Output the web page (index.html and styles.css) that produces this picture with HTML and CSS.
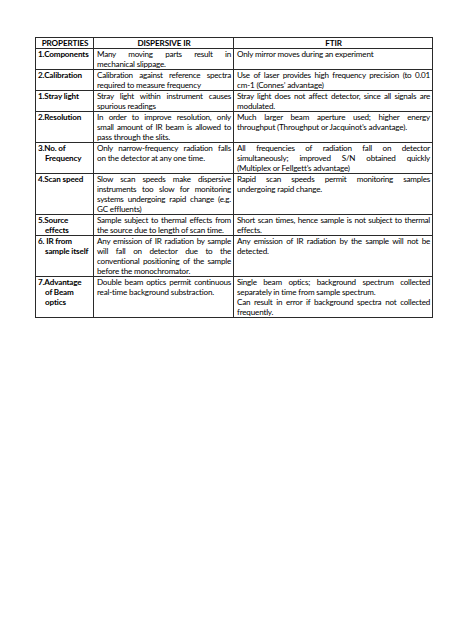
FILE: index.html
```html
<!DOCTYPE html>
<html>
<head>
<meta charset="utf-8">
<link rel="stylesheet" href="styles.css">
</head>
<body>
<table class="cmp">
<colgroup><col class="c1"><col class="c2"><col class="c3"></colgroup>
<thead>
<tr><th>PROPERTIES</th><th>DISPERSIVE IR</th><th>FTIR</th></tr>
</thead>
<tbody>
<tr>
<td class="p"><span class="ln">1.Components</span></td>
<td><span class="ln">Many moving parts result in</span><span class="ln">mechanical slippage.</span></td>
<td><span class="ln">Only mirror moves during an experiment</span></td>
</tr>
<tr>
<td class="p"><span class="ln">2.Calibration</span></td>
<td><span class="ln">Calibration against reference spectra</span><span class="ln">required to measure frequency</span></td>
<td><span class="ln">Use of laser provides high frequency precision (to 0.01</span><span class="ln">cm-1 (Connes’ advantage)</span></td>
</tr>
<tr>
<td class="p"><span class="ln">1.Stray light</span></td>
<td><span class="ln">Stray light within instrument causes</span><span class="ln">spurious readings</span></td>
<td><span class="ln">Stray light does not affect detector, since all signals are</span><span class="ln">modulated.</span></td>
</tr>
<tr>
<td class="p"><span class="ln">2.Resolution</span></td>
<td><span class="ln">In order to improve resolution, only</span><span class="ln">small amount of IR beam is allowed to</span><span class="ln">pass through the slits.</span></td>
<td><span class="ln">Much larger beam aperture used; higher energy</span><span class="ln">throughput (Throughput or Jacquinot’s advantage).</span></td>
</tr>
<tr>
<td class="p"><span class="ln">3.No. of</span><span class="ln in">Frequency</span></td>
<td><span class="ln">Only narrow-frequency radiation falls</span><span class="ln">on the detector at any one time.</span></td>
<td><span class="ln">All frequencies of radiation fall on detector</span><span class="ln">simultaneously; improved S/N obtained quickly</span><span class="ln">(Multiplex or Fellgett’s advantage)</span></td>
</tr>
<tr>
<td class="p"><span class="ln">4.Scan speed</span></td>
<td><span class="ln">Slow scan speeds make dispersive</span><span class="ln">instruments too slow for monitoring</span><span class="ln">systems undergoing rapid change (e.g.</span><span class="ln">GC effluents)</span></td>
<td><span class="ln">Rapid scan speeds permit monitoring samples</span><span class="ln">undergoing rapid change.</span></td>
</tr>
<tr>
<td class="p"><span class="ln">5.Source</span><span class="ln in">effects</span></td>
<td><span class="ln">Sample subject to thermal effects from</span><span class="ln">the source due to length of scan time.</span></td>
<td><span class="ln">Short scan times, hence sample is not subject to thermal</span><span class="ln">effects.</span></td>
</tr>
<tr>
<td class="p"><span class="ln">6. IR from</span><span class="ln in">sample itself</span></td>
<td><span class="ln">Any emission of IR radiation by sample</span><span class="ln">will fall on detector due to the</span><span class="ln">conventional positioning of the sample</span><span class="ln">before the monochromator.</span></td>
<td><span class="ln">Any emission of IR radiation by the sample will not be</span><span class="ln">detected.</span></td>
</tr>
<tr>
<td class="p"><span class="ln">7.Advantage</span><span class="ln in">of Beam</span><span class="ln in">optics</span></td>
<td><span class="ln">Double beam optics permit continuous</span><span class="ln">real-time background substraction.</span></td>
<td><span class="ln">Single beam optics; background spectrum collected</span><span class="ln end">separately in time from sample spectrum.</span><span class="ln">Can result in error if background spectra not collected</span><span class="ln">frequently.</span></td>
</tr>
</tbody>
</table>
</body>
</html>
```

FILE: styles.css
```css
html, body {
  margin: 0;
  padding: 0;
  background: #fff;
}
body {
  padding: 37px 0 0 35px;
  font-family: Lato, "Open Sans", sans-serif;
  color: #000;
}
.cmp {
  border-collapse: collapse;
  table-layout: fixed;
  width: 397px;
  font-size: 8.1px;
  line-height: 10px;
  letter-spacing: -0.25px;
  word-spacing: -0.6px;
}
.c1 { width: 58px; }
.c2 { width: 140px; }
.c3 { width: 199px; }
.cmp th, .cmp td {
  border: 1px solid #2a2a2a;
  padding: 0 2px 0 3px;
  vertical-align: top;
}
.cmp th {
  font-weight: 700;
  text-align: center;
  letter-spacing: -0.1px;
  word-spacing: 0;
}
.ln {
  display: block;
  text-align: justify;
  text-align-last: justify;
}
.ln:last-child,
.ln.end {
  text-align-last: left;
  letter-spacing: -0.18px;
  word-spacing: 0;
}
.cmp td.p {
  font-weight: 700;
  padding-left: 2px;
  padding-right: 1px;
}
.cmp td.p .ln {
  text-align-last: left;
  letter-spacing: -0.15px;
  word-spacing: 0;
}
.cmp td.p .in {
  padding-left: 7px;
}
```
